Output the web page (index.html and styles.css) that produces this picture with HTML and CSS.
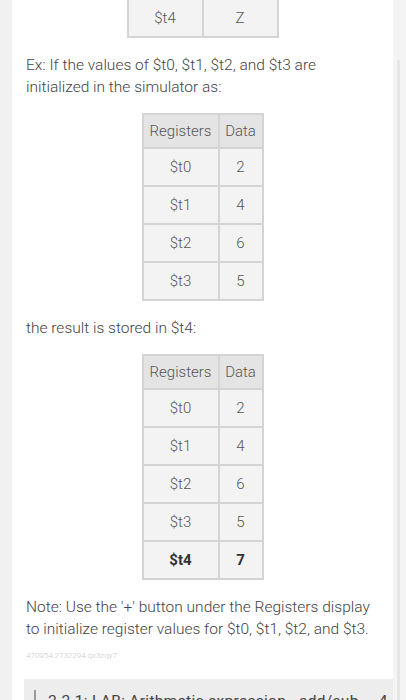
FILE: index.html
```html
<!DOCTYPE html>
<html>
<head>
<meta charset="utf-8">
<link rel="stylesheet" href="styles.css">
</head>
<body>
<div class="page">
  <div class="card">
    <table class="reg top">
      <tr><td class="c1">$t4</td><td class="c2">Z</td></tr>
    </table>
    <p class="txt">Ex: If the values of $t0, $t1, $t2, and $t3 are initialized in the simulator as:</p>
    <table class="reg">
      <tr><th class="c1">Registers</th><th class="c2">Data</th></tr>
      <tr><td>$t0</td><td>2</td></tr>
      <tr><td>$t1</td><td>4</td></tr>
      <tr><td>$t2</td><td>6</td></tr>
      <tr><td>$t3</td><td>5</td></tr>
    </table>
    <p class="txt">the result is stored in $t4:</p>
    <table class="reg">
      <tr><th class="c1">Registers</th><th class="c2">Data</th></tr>
      <tr><td>$t0</td><td>2</td></tr>
      <tr><td>$t1</td><td>4</td></tr>
      <tr><td>$t2</td><td>6</td></tr>
      <tr><td>$t3</td><td>5</td></tr>
      <tr class="bold"><td>$t4</td><td>7</td></tr>
    </table>
    <p class="txt note">Note: Use the '+' button under the Registers display to initialize register values for $t0, $t1, $t2, and $t3.</p>
    <div class="id">470954.2732294.qx3zqy7</div>
    <div class="lab"><span class="bar"></span><span class="lab-title">2.2.1: LAB: Arithmetic expression - add/sub</span><span class="lab-score">4 / 10</span></div>
  </div>
  <div class="scroll"><div class="thumb"></div></div>
</div>
</body>
</html>
```
FILE: styles.css
```css
html, body {
  margin: 0;
  padding: 0;
  height: 700px;
  overflow: hidden;
  background: #f1f1f1;
  font-family: Roboto, "Liberation Sans", sans-serif;
}
.page {
  display: flex;
  height: 700px;
  padding-left: 12px;
}
.card {
  width: 381px;
  background: #fff;
  overflow: hidden;
}
.scroll {
  width: 13px;
  display: flex;
  justify-content: flex-end;
  padding-right: 6px;
  box-sizing: border-box;
  background: #f4f4f4;
}
.thumb {
  width: 3px;
  margin-top: 60px;
  height: 640px;
  background: #e6e6e6;
}
.reg {
  border-collapse: collapse;
  margin: 0 auto;
  table-layout: fixed;
  border: 2px solid #d0d0d0;
}
.reg th, .reg td {
  border: 2px solid #d4d4d4;
  text-align: center;
  font-weight: 300;
  color: #555;
  font-size: 15px;
  padding: 0;
}
.reg th {
  background: #e4e4e4;
  height: 32px;
}
.reg td {
  background: #f3f3f3;
  height: 36px;
}
.reg .c1 { width: 74px; }
.reg .c2 { width: 42px; }
.reg.top { margin-top: -2px; }
.reg.top .c1, .reg.top .c2 { width: 73px; }
.reg.top td { height: 36px; }
.reg .bold td {
  font-weight: 700;
  color: #333;
}
.txt {
  margin: 16px 0 15px 0;
  padding: 0 14px;
  font-size: 15.5px;
  line-height: 22px;
  font-weight: 300;
  color: #444;
}
.note {
  margin-bottom: 8px;
}
.id {
  padding: 0 14px;
  font-size: 8px;
  line-height: 16px;
  color: #c8c8c8;
  font-weight: 300;
}
.lab {
  margin: 15px 0 0 12px;
  height: 60px;
  background: #ededed;
  display: flex;
  align-items: flex-start;
  padding-top: 11px;
  padding-left: 10px;
  white-space: nowrap;
  box-sizing: border-box;
}
.bar {
  width: 2px;
  height: 40px;
  background: #9a9a9a;
  flex: none;
}
.lab-title {
  margin-left: 12px;
  font-size: 15.5px;
  line-height: 20px;
  letter-spacing: 0.3px;
  color: #444;
  padding-top: 1px;
}
.lab-score {
  margin-left: 20px;
  font-size: 15.5px;
  line-height: 20px;
  color: #444;
  padding-top: 1px;
}
```
